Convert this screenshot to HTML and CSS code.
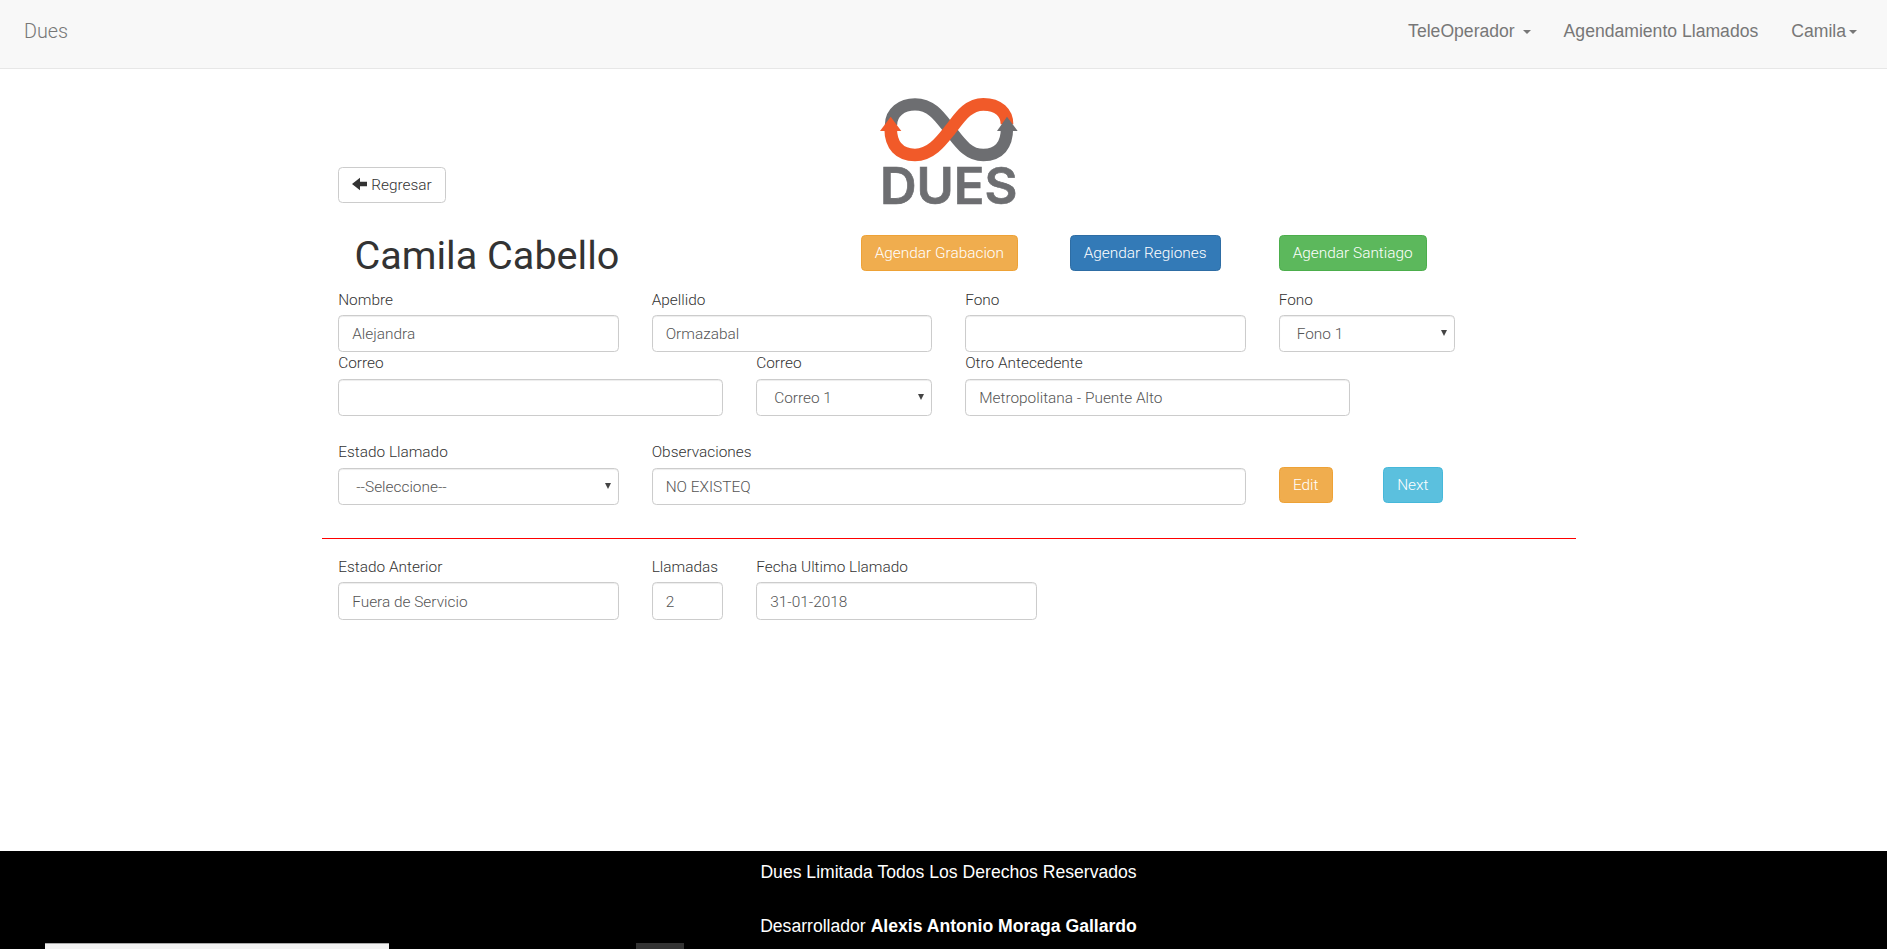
FILE: index.html
```html
<!DOCTYPE html>
<html lang="es">
<head>
<meta charset="utf-8">
<title>Dues</title>
<link rel="stylesheet" href="styles.css">
</head>
<body>
<nav class="navbar">
  <a class="brand">Dues</a>
  <ul class="menu">
    <li>TeleOperador <span class="caret"></span></li>
    <li>Agendamiento Llamados</li>
    <li>Camila<span class="caret"></span></li>
  </ul>
</nav>
<main class="container">
  <header class="top">
    <button class="btn btn-default"><svg class="arrow" viewBox="0 0 16 14"><path d="M0 7L8 .7V4.7H15V9.3H8V13.3Z"/></svg>Regresar</button>
    <svg class="logo" viewBox="0 0 540 420">
      <g fill="none" stroke-width="37">
        <path stroke="#6d6e71" d="M93 135C93 97 125 73 165 73C218 73 243 116 270 150C297 184 322 225 370 225C418 225 441 195 441 145"/>
        <path stroke="#f15a29" stroke-width="38" d="M92 145C92 198 119 225 165 225C213 225 243 184 270 150C297 116 322 73 370 73C416 73 441 99 441 133"/>
      </g>
      <path fill="#f15a29" d="M92 110L124 153H60Z"/>
      <path fill="#6d6e71" d="M441 110L473 153H411Z"/>
      <text class="logo-text" x="60" y="372" textLength="412" lengthAdjust="spacingAndGlyphs">DUES</text>
    </svg>
  </header>
  <div class="row heading">
    <h1 class="c5">Camila Cabello</h1>
    <div class="c2"><button class="btn warning">Agendar Grabacion</button></div>
    <div class="c2"><button class="btn primary">Agendar Regiones</button></div>
    <div class="c2"><button class="btn success">Agendar Santiago</button></div>
  </div>
  <div class="row first">
    <label class="c3">Nombre<input value="Alejandra"></label>
    <label class="c3">Apellido<input value="Ormazabal"></label>
    <label class="c3">Fono<input></label>
    <label class="c2">Fono<span class="select"><select><option>Fono 1</option></select></span></label>
  </div>
  <div class="row second">
    <label class="c4">Correo<input></label>
    <label class="c2">Correo<span class="select"><select><option>Correo 1</option></select></span></label>
    <label class="c4">Otro Antecedente<input value="Metropolitana - Puente Alto"></label>
  </div>
  <div class="row status">
    <label class="c3">Estado Llamado<span class="select"><select><option>--Seleccione--</option></select></span></label>
    <label class="c6">Observaciones<input value="NO EXISTEQ"></label>
    <div class="c1 action"><button class="btn warning edit">Edit</button></div>
    <div class="c1 action"><button class="btn info">Next</button></div>
  </div>
  <hr class="rule">
  <div class="row previous">
    <label class="c3">Estado Anterior<input value="Fuera de Servicio"></label>
    <label class="c1">Llamadas<input value="2"></label>
    <label class="c3">Fecha Ultimo Llamado<input value="31-01-2018"></label>
  </div>
</main>
<footer class="footer">
  <p>Dues Limitada Todos Los Derechos Reservados</p>
  <p>Desarrollador <b>Alexis Antonio Moraga Gallardo</b></p>
  <div class="taskbar"><span class="task-search"></span><span class="task-active"></span></div>
</footer>
</body>
</html>
```

FILE: styles.css
```css
* { box-sizing: border-box; }
body {
  margin: 0;
  height: 949px;
  overflow: hidden;
  display: flex;
  flex-direction: column;
  background: #fff;
  color: #333;
  font: 300 15.4px/22px Roboto, sans-serif;
}
.navbar {
  height: 69px;
  flex: none;
  display: flex;
  justify-content: space-between;
  padding: 19px 30px 0 24px;
  background: #f8f8f8;
  border-bottom: 1px solid #e7e7e7;
  color: #777;
}
.brand { padding-top: 1px; font-size: 19.8px; line-height: 24px; }
.menu {
  display: flex;
  gap: 33px;
  margin: 0;
  padding: 0;
  list-style: none;
  font: 400 17.6px/24px "Liberation Sans", Arial, sans-serif;
}
.caret {
  display: inline-block;
  margin-left: 3px;
  vertical-align: middle;
  border-top: 4px solid;
  border-left: 4px solid transparent;
  border-right: 4px solid transparent;
}
.container {
  width: 1254px;
  margin-left: 322px;
  flex: 1;
}
.top {
  height: 166px;
  display: flex;
  align-items: flex-start;
  padding-left: 16px;
}
.top .btn { margin-top: 98px; }
.logo { width: 180px; height: 140px; margin: 11px 0 0 414px; }
.logo-text { font: 600 151px Inter, sans-serif; fill: #6d6e71; stroke: #6d6e71; stroke-width: 2px; }
.btn {
  height: 36px;
  padding: 0 13px;
  border: 1px solid;
  border-radius: 4.4px;
  color: #fff;
  font: 300 15.4px/22px Roboto, sans-serif;
  white-space: nowrap;
}
.btn-default { width: 108px; background: #fff; border-color: #ccc; color: #333; }
.edit { width: 54px; }
.arrow { width: 16px; height: 14px; margin-right: 3px; vertical-align: -1px; fill: #333; }
.warning { background: #f0ad4e; border-color: #eea236; }
.primary { background: #337ab7; border-color: #2e6da4; }
.success { background: #5cb85c; border-color: #4cae4c; }
.info { background: #5bc0de; border-color: #46b8da; }
.row { display: grid; grid-template-columns: repeat(12, 1fr); }
.row > * { padding: 0 16.8px 0 16.2px; min-width: 0; }
.c1 { grid-column: span 1; }
.c2 { grid-column: span 2; }
.c3 { grid-column: span 3; }
.c4 { grid-column: span 4; }
.c5 { grid-column: span 5; }
.c6 { grid-column: span 6; }
.heading { height: 54px; }
.row.heading h1 { margin: 0; padding-left: 32.5px; font-weight: 400; font-size: 39.6px; line-height: 42px; }
label { display: block; }
input, select {
  display: block;
  width: 100%;
  height: 37px;
  margin-top: 5px;
  padding: 0 13px;
  border: 1px solid #ccc;
  border-radius: 4.4px;
  background: #fff;
  box-shadow: inset 0 1px 1px rgba(0, 0, 0, .075);
  color: #555;
  font: inherit;
  appearance: none;
}
.select { display: block; position: relative; }
.select select { padding-left: 17px; }
.select::after {
  content: "";
  position: absolute;
  top: 15px;
  right: 8px;
  border-top: 6px solid #444;
  border-left: 3px solid transparent;
  border-right: 3px solid transparent;
}
.first { height: 63px; }
.first input, .first select { margin-top: 4px; }
.second { height: 89px; }
.status { height: 97px; }
.row > .action { padding-top: 26px; }
.rule { height: 1px; margin: 0 0 17px; border: 0; background: #f00; }
.previous input { margin-top: 4px; height: 38px; padding-top: 1px; }
.footer {
  height: 98px;
  flex: none;
  display: flex;
  flex-direction: column;
  padding-top: 9px;
  background: #000;
  color: #fff;
  text-align: center;
  font: 400 17.6px/24px "Liberation Sans", Arial, sans-serif;
}
.footer p { margin: 0 0 30px; padding-left: 10px; }
.footer p + p { margin-bottom: 0; }
.taskbar { display: flex; height: 6px; margin-top: auto; padding-left: 45px; gap: 247px; }
.task-search { width: 344px; background: #f2f2f2; border-top: 1px solid #aaa; }
.task-active { width: 48px; background: #333; }
```
